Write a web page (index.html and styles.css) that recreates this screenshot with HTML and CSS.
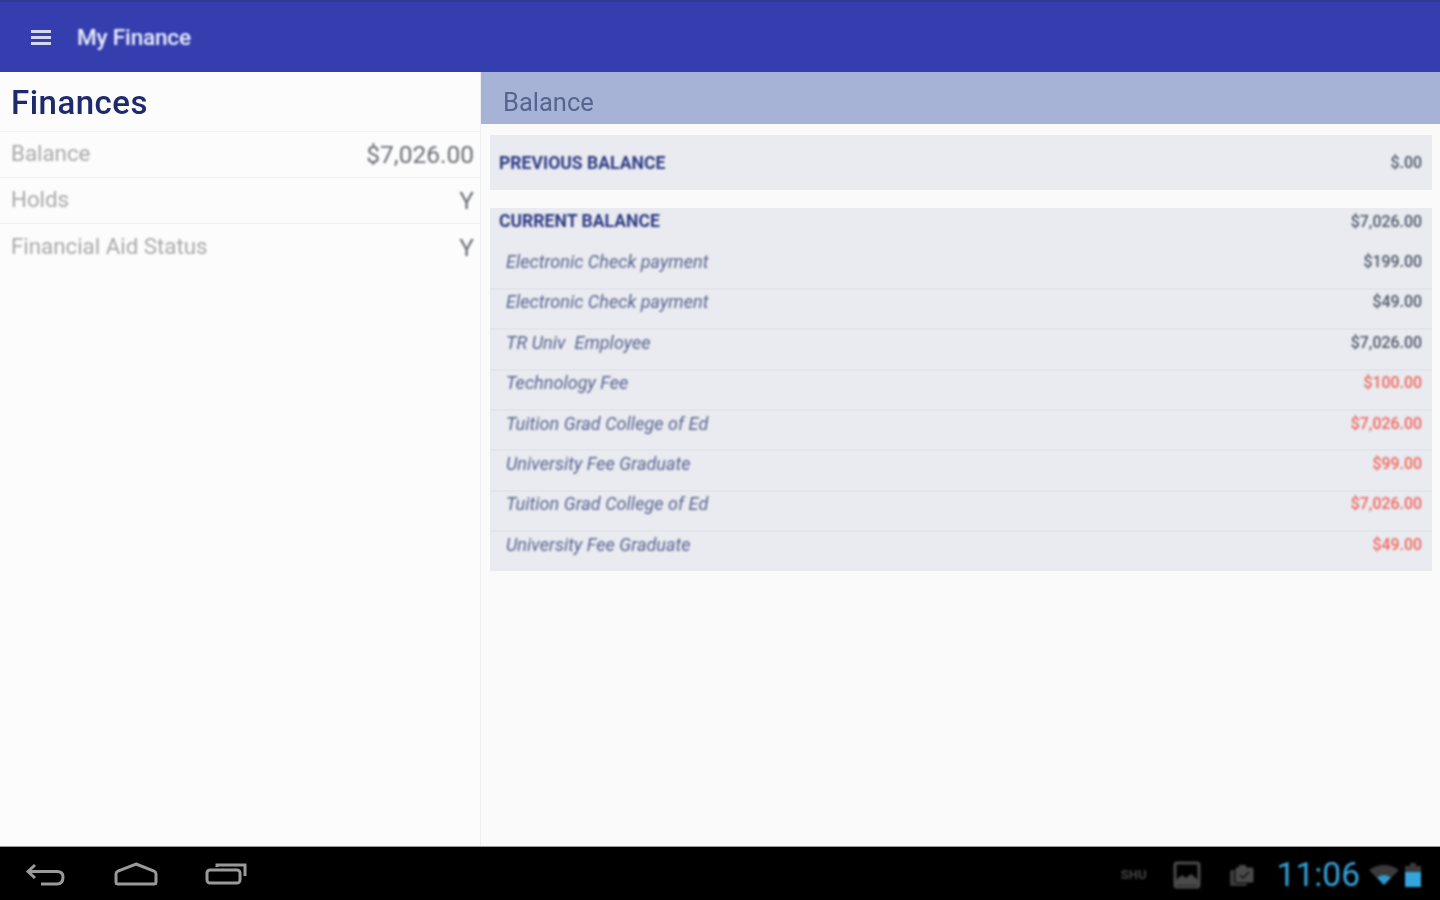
FILE: index.html
```html
<!DOCTYPE html>
<html lang="en">
<head>
  <meta charset="UTF-8">
  <title>My Finance</title>
  <link rel="stylesheet" href="styles.css">
</head>
<body>
  <header class="app_bar">
    <span class="menu_icon"><i></i><i></i><i></i></span>
    <h1>My Finance</h1>
  </header>

  <main class="content">
    <section class="left_pane">
      <h2>Finances</h2>
      <div class="sum_row"><span>Balance</span><b>$7,026.00</b></div>
      <div class="sum_row"><span>Holds</span><b>Y</b></div>
      <div class="sum_row"><span>Financial Aid Status</span><b>Y</b></div>
    </section>

    <section class="right_pane">
      <h3><span>Balance</span></h3>
      <div class="box box_prev">
        <div class="head_row"><span>PREVIOUS BALANCE</span><b>$.00</b></div>
      </div>
      <div class="box box_curr">
        <div class="head_row"><span>CURRENT BALANCE</span><b>$7,026.00</b></div>
        <div class="line"><span>Electronic Check payment</span><b>$199.00</b></div>
        <div class="line"><span>Electronic Check payment</span><b>$49.00</b></div>
        <div class="line"><span>TR Univ&nbsp; Employee</span><b>$7,026.00</b></div>
        <div class="line red"><span>Technology Fee</span><b>$100.00</b></div>
        <div class="line red"><span>Tuition Grad College of Ed</span><b>$7,026.00</b></div>
        <div class="line red"><span>University Fee Graduate</span><b>$99.00</b></div>
        <div class="line red"><span>Tuition Grad College of Ed</span><b>$7,026.00</b></div>
        <div class="line red"><span>University Fee Graduate</span><b>$49.00</b></div>
      </div>
    </section>
  </main>

  <footer class="sys_bar">
    <div class="nav_btns">
      <svg width="42" height="26" viewBox="0 0 42 26"><path d="M10 3 L3 9.5 L10 16 M3 9.5 H32 Q38 9.5 38 15 Q38 22 32 22 H16" fill="none" stroke="#9a9a9a" stroke-width="3"/></svg>
      <svg width="44" height="26" viewBox="0 0 44 26"><path d="M22 2 L40 9 Q42 10 42 12 V20 Q42 22 40 22 H4 Q2 22 2 20 V12 Q2 10 4 9 Z" fill="none" stroke="#9a9a9a" stroke-width="3"/></svg>
      <svg width="44" height="26" viewBox="0 0 44 26"><path d="M12 5 V3 H40 V14" fill="none" stroke="#9a9a9a" stroke-width="3"/><rect x="2" y="8" width="33" height="13" rx="3" fill="none" stroke="#9a9a9a" stroke-width="3"/></svg>
    </div>
    <div class="status">
      <span class="ime">SHU</span>
      <svg class="pic" width="28" height="28" viewBox="0 0 28 28"><rect x="2" y="2" width="24" height="24" rx="2" fill="none" stroke="#4a4a4a" stroke-width="3"/><path d="M3 24 V19 L9 14 L13 17 L18 13 L25 19 V24 Z" fill="#4a4a4a"/></svg>
      <svg class="task" width="26" height="26" viewBox="0 0 26 26"><rect x="1" y="8" width="17" height="16" rx="2" fill="#3c3c3c"/><rect x="6" y="5" width="19" height="16" rx="2" fill="#4a4a4a" stroke="#000"/><path d="M10 3 H17 V6 H10 Z" fill="#4a4a4a"/><path d="M11 13 L14 16 L20 10" fill="none" stroke="#111" stroke-width="1.5"/></svg>
      <span class="clock">11:06</span>
      <svg class="wifi" width="30" height="22" viewBox="0 0 30 22"><path d="M0 6 Q15 -4 30 6 L15 21 Z" fill="#3a3a3a"/><path d="M8 13.5 Q15 8.5 22 13.5 L15 21 Z" fill="#2f9bd0"/></svg>
      <svg class="batt" width="18" height="26" viewBox="0 0 18 26"><path d="M6 1 H12 V4 H17 V10 H1 V4 H6 Z" fill="#3a3a3a"/><rect x="1" y="10" width="16" height="15" fill="#33a5dc"/></svg>
    </div>
  </footer>
</body>
</html>
```

FILE: styles.css
```css
*{margin:0;padding:0;box-sizing:border-box;}
html,body{height:100%;overflow:hidden;}
body{display:flex;flex-direction:column;height:900px;background:#fafafa;font-family:Roboto,"Liberation Sans",sans-serif;}

/* top bar */
.app_bar{height:72px;flex:none;display:flex;align-items:center;padding:1px 0 0 31px;background:#343eaf;border-top:2px solid #2f3a8e;}
.menu_icon{width:20px;display:flex;flex-direction:column;gap:3px;margin-right:26px;filter:blur(.5px);}
.menu_icon i{display:block;height:3px;background:#d5d9f0;}
.app_bar h1{font-size:22.6px;font-weight:500;color:#eceefa;letter-spacing:-.2px;filter:blur(.8px);}

.content{flex:1;display:flex;min-height:0;}

/* left list */
.left_pane{width:481px;flex:none;border-right:1px solid #eeeeee;background:#fcfcfc;}
.left_pane h2{height:60px;padding:11px 0 0 11px;font-size:33px;font-weight:500;letter-spacing:.5px;line-height:40px;color:#1d2a6e;border-bottom:1px solid #f0f0f0;filter:blur(.7px);}
.sum_row{height:46px;display:flex;justify-content:space-between;align-items:center;padding:0 6px 0 11px;border-bottom:1px solid #f0f0f0;font-size:22.3px;}
.sum_row:last-child{border-bottom:0;}
.sum_row span{color:#a9a9a9;margin-bottom:3px;filter:blur(.8px);}
.sum_row b{font-weight:400;font-size:24.5px;color:#6c6f75;filter:blur(.8px);}

/* right detail */
.right_pane{flex:1;min-width:0;}
.right_pane h3{height:52px;padding:0 0 0 22px;font-size:25.5px;font-weight:400;line-height:60px;color:#56658f;background:#a6b3d6;}
.right_pane h3 span{display:block;filter:blur(.7px);}
.box{margin:0 8px 0 9px;background:#e9ebf0;}
.box_prev{height:55px;margin-top:11px;padding-top:15px;}
.box_curr{margin-top:18px;height:363px;}
.box_curr .head_row{height:41.5px;padding-bottom:15.5px;}
.head_row{height:25px;display:flex;justify-content:space-between;align-items:center;padding:0 10px 0 9px;font-size:17.5px;font-weight:700;color:#2e3a86;}
.head_row span{filter:blur(.8px);letter-spacing:.05px;}
.head_row b{font-size:15.9px;font-weight:500;color:#4f5668;filter:blur(.9px);}
.line{height:40.4px;display:flex;justify-content:space-between;align-items:flex-start;padding:0 10px 0 16px;border-bottom:2px solid #e3e5ea;font-size:18px;color:#59628f;}
.line:last-child{height:38px;border-bottom:0;}
.line span{font-style:italic;letter-spacing:.04px;filter:blur(.8px);padding-top:1.5px;}
.line b{font-size:15.9px;font-weight:500;padding-top:2.5px;color:#4f5668;filter:blur(.9px);}
.line.red b{color:#f0665c;}

/* android system bar */
.sys_bar{height:54px;flex:none;display:flex;justify-content:space-between;align-items:center;padding-top:2px;background:#000;border-top:1px solid #9a9a9a;}
.nav_btns{display:flex;gap:47px;padding-left:25px;filter:blur(.7px);}
.status{display:flex;align-items:center;padding-right:18px;filter:blur(.8px);}
.ime{font-size:13px;font-weight:700;color:#444;margin-right:26px;}
.pic{margin-right:28px;}
.task{margin-right:22px;}
.clock{font-size:33.5px;color:#33a5dc;margin-right:9px;}
.wifi{margin-right:5px;}
```
